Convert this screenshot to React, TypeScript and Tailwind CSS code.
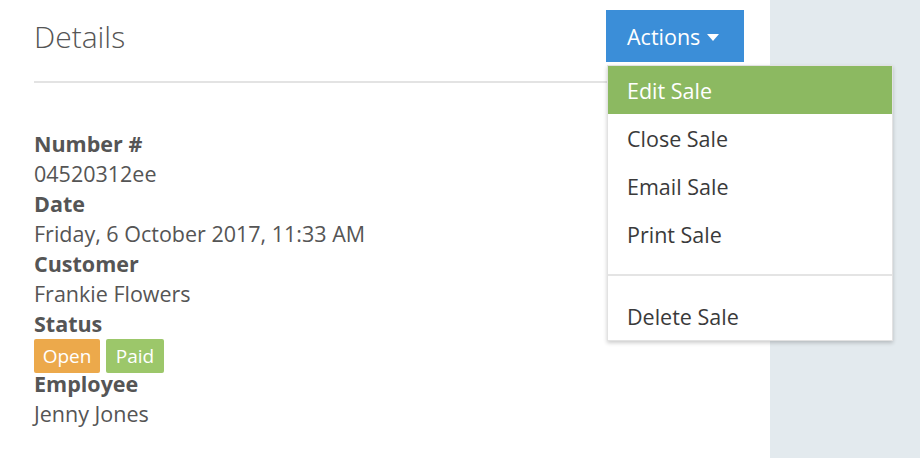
import React from "react";

const font = { fontFamily: '"Open Sans", "Noto Sans", sans-serif' };

export default function App() {
  return (
    <div className="flex w-[920px] h-[458px] overflow-hidden" style={font}>
      <div className="w-[770px] bg-white pl-[34px] pr-[26px] pt-[10px]">
        <div className="flex items-center justify-between h-[52px]">
          <h1 className="text-[30px] font-light text-[#555] leading-none mt-[2px]">Details</h1>
          <div className="relative">
            <button className="h-[52px] w-[138px] bg-[#3b8ed8] text-white text-[21.5px] flex items-center pl-[21px] gap-[7px] pt-[2px]">
              <span>Actions</span>
              <svg width="12" height="7" viewBox="0 0 12 7"><path d="M0 0h12L6 7z" fill="white" /></svg>
            </button>
            <div className="absolute left-[1px] top-[55px] w-[286px] bg-white border border-[#e2e2e2] shadow-[0_2px_4px_rgba(0,0,0,0.2)] z-10">
              <div className="h-[48px] flex items-center pl-[19px] pt-[3px] bg-[#8cb961] text-white text-[21.5px]">Edit Sale</div>
              <div className="h-[48px] flex items-center pl-[19px] pt-[3px] text-[#3a3a3a] text-[21.5px]">Close Sale</div>
              <div className="h-[48px] flex items-center pl-[19px] pt-[3px] text-[#3a3a3a] text-[21.5px]">Email Sale</div>
              <div className="h-[48px] flex items-center pl-[19px] pt-[3px] text-[#3a3a3a] text-[21.5px]">Print Sale</div>
              <div className="my-[16px] h-[2px] bg-[#e4e4e4]" />
              <div className="h-[48px] flex items-center pl-[19px] pt-[3px] text-[#3a3a3a] text-[21.5px]">Delete Sale</div>
            </div>
          </div>
        </div>
        <div className="mt-[19px] h-[2px] bg-[#e3e3e3]" />
        <div className="mt-[46px] text-[21.5px] leading-[30px] text-[#555]">
          <div className="font-bold">Number #</div>
          <div>04520312ee</div>
          <div className="font-bold">Date</div>
          <div>Friday, 6 October 2017, 11:33 AM</div>
          <div className="font-bold">Customer</div>
          <div>Frankie Flowers</div>
          <div className="font-bold">Status</div>
          <div className="h-[30px] flex gap-[6px]">
            <span className="h-[34px] w-[66px] justify-center flex items-center rounded-[2px] bg-[#eca94b] text-white text-[19px]">Open</span>
            <span className="h-[34px] w-[58px] justify-center flex items-center rounded-[2px] bg-[#9cc76a] text-white text-[19px]">Paid</span>
          </div>
          <div className="font-bold">Employee</div>
          <div>Jenny Jones</div>
        </div>
      </div>
      <div className="flex-1 bg-[#e3eaee]" />
    </div>
  );
}
